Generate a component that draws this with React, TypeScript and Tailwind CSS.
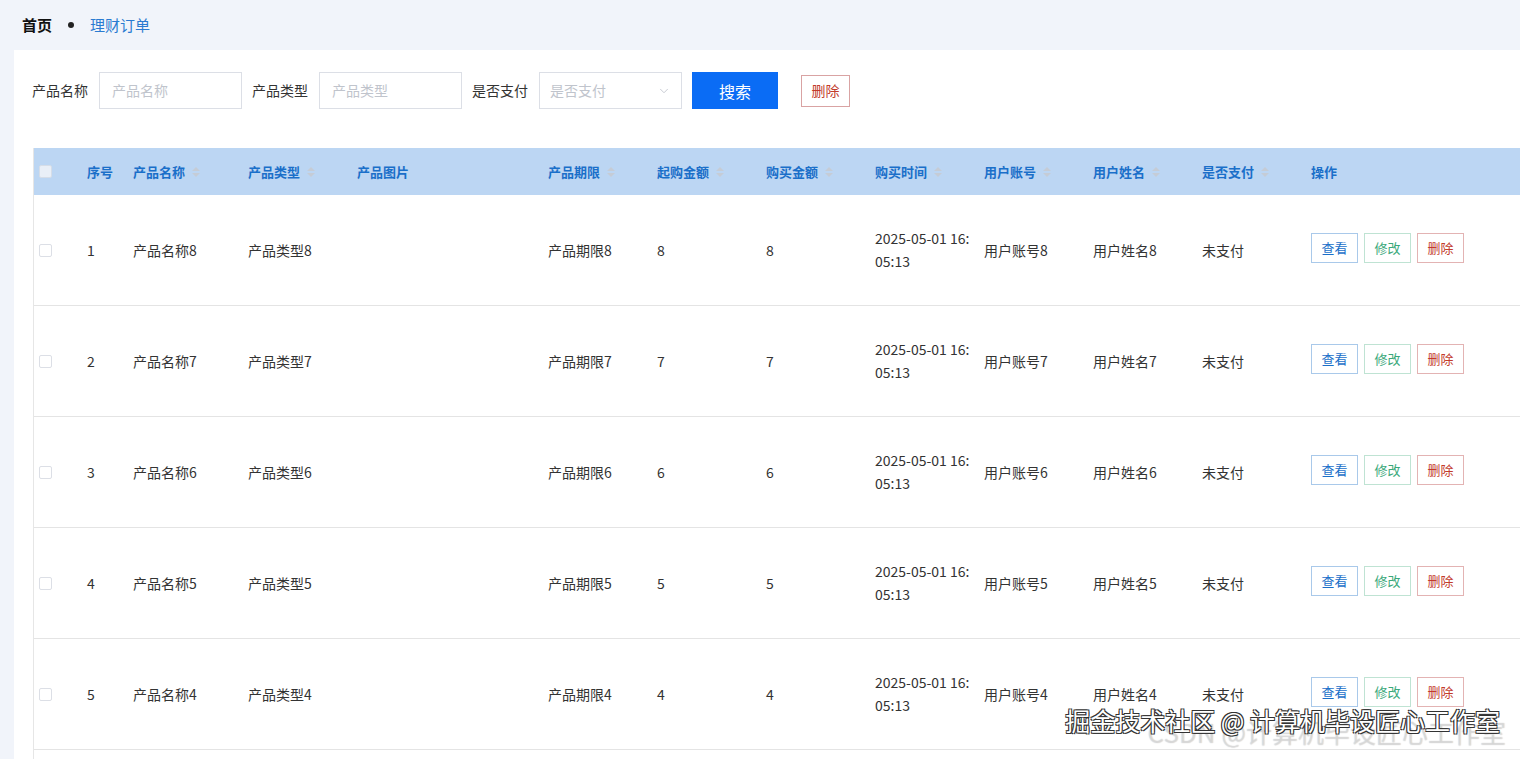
import { ChevronDown } from "lucide-react";

const rows = [
  { no: 1, n: 8 },
  { no: 2, n: 7 },
  { no: 3, n: 6 },
  { no: 4, n: 5 },
  { no: 5, n: 4 },
];

const columns = [
  { label: "序号", sort: false },
  { label: "产品名称", sort: true },
  { label: "产品类型", sort: true },
  { label: "产品图片", sort: false },
  { label: "产品期限", sort: true },
  { label: "起购金额", sort: true },
  { label: "购买金额", sort: true },
  { label: "购买时间", sort: true },
  { label: "用户账号", sort: true },
  { label: "用户姓名", sort: true },
  { label: "是否支付", sort: true },
  { label: "操作", sort: false },
];

const grid =
  "grid grid-cols-[41px_46px_115px_109px_191px_109px_109px_109px_109px_109px_109px_109px_1fr]";

function SortCaret() {
  return (
    <span className="ml-[7px] inline-flex flex-col gap-[2px]">
      <span className="h-0 w-0 border-x-[4px] border-b-[4px] border-x-transparent border-b-[#c5ccd6]" />
      <span className="h-0 w-0 border-x-[4px] border-t-[4px] border-x-transparent border-t-[#c5ccd6]" />
    </span>
  );
}

function Field({ label, placeholder }: { label: string; placeholder: string }) {
  return (
    <div className="flex items-center">
      <span className="mr-[11px] text-[14px] text-[#333]">{label}</span>
      <div className="flex h-[37px] w-[143px] items-center border border-[#dcdfe6] px-[12px] text-[14px] text-[#c0c4cc]">
        {placeholder}
      </div>
    </div>
  );
}

export default function App() {
  return (
    <div
      className="relative h-[759px] overflow-hidden bg-[#f1f4fa]"
      style={{ fontFamily: '"Noto Sans CJK SC", "Noto Sans", sans-serif' }}
    >
      {/* Breadcrumb */}
      <div className="flex h-[50px] items-center pl-[22px] text-[15px]">
        <span className="font-bold text-[#111]">首页</span>
        <span className="mx-[16px] h-[6px] w-[6px] rounded-full bg-[#222]" />
        <span className="text-[#2a7bd1]">理财订单</span>
      </div>

      <div className="ml-[14px] h-[709px] bg-white pt-[22px]">
        {/* Search bar */}
        <div className="flex items-center pl-[18px]">
          <Field label="产品名称" placeholder="产品名称" />
          <div className="ml-[10px]">
            <Field label="产品类型" placeholder="产品类型" />
          </div>
          <div className="ml-[10px] flex items-center">
            <span className="mr-[11px] text-[14px] text-[#333]">是否支付</span>
            <div className="flex h-[37px] w-[143px] items-center justify-between border border-[#dcdfe6] px-[10px] text-[14px] text-[#c0c4cc]">
              是否支付
              <ChevronDown className="h-[14px] w-[14px] text-[#c0c4cc]" strokeWidth={1.5} />
            </div>
          </div>
          <button className="ml-[10px] h-[37px] w-[86px] bg-[#0a6cf5] text-[16px] text-white">搜索</button>
          <button className="ml-[23px] h-[32px] w-[49px] border border-[#d9a3a3] bg-white text-[14px] text-[#c23b2b]">
            删除
          </button>
        </div>

        {/* Table */}
        <div className="ml-[19px] mt-[39px] h-[640px] border-l border-[#e6e6e6]">
          <div className={`${grid} h-[47px] items-center bg-[#bcd6f3]`}>
            <div className="pl-[5px]">
              <span className="block h-[13px] w-[13px] rounded-[2px] border border-[#d5dde8] bg-[#e9eff7]" />
            </div>
            {columns.map((c) => (
              <div key={c.label} className="flex items-center pl-[12px] text-[13px] font-bold text-[#1a6fc9]">
                {c.label}
                {c.sort && <SortCaret />}
              </div>
            ))}
          </div>

          {rows.map((r) => (
            <div key={r.no} className={`${grid} h-[111px] items-center border-b border-[#e4e4e4] text-[14px] text-[#333]`}>
              <div className="pl-[5px]">
                <span className="block h-[13px] w-[13px] rounded-[2px] border border-[#dcdfe6] bg-white" />
              </div>
              <div className="pl-[12px]">{r.no}</div>
              <div className="pl-[12px]">产品名称{r.n}</div>
              <div className="pl-[12px]">产品类型{r.n}</div>
              <div className="pl-[12px]" />
              <div className="pl-[12px]">产品期限{r.n}</div>
              <div className="pl-[12px]">{r.n}</div>
              <div className="pl-[12px]">{r.n}</div>
              <div className="pl-[12px] leading-[23px]">
                2025-05-01 16:
                <br />
                05:13
              </div>
              <div className="pl-[12px]">用户账号{r.n}</div>
              <div className="pl-[12px]">用户姓名{r.n}</div>
              <div className="pl-[12px]">未支付</div>
              <div className="flex gap-[6px] pb-[5px] pl-[12px]">
                <button className="h-[30px] w-[47px] border border-[#a9c9ea] text-[13px] text-[#1a6fc9]">查看</button>
                <button className="h-[30px] w-[47px] border border-[#bfe3d3] text-[13px] text-[#3aa87a]">修改</button>
                <button className="h-[30px] w-[47px] border border-[#e3b3b3] text-[13px] text-[#c23b2b]">删除</button>
              </div>
            </div>
          ))}
        </div>
      </div>

      {/* Watermark */}
      <div className="pointer-events-none absolute bottom-[8px] right-[14px] text-[26px] text-white/40 [text-shadow:0_0_1px_#bbb]">
        CSDN @计算机毕设匠心工作室
      </div>
      <div className="pointer-events-none absolute bottom-[20px] right-[20px] text-[25px] text-white [text-shadow:-1px_-1px_0_#333,1px_-1px_0_#333,-1px_1px_0_#333,1px_1px_0_#333]">
        掘金技术社区 @ 计算机毕设匠心工作室
      </div>
    </div>
  );
}
